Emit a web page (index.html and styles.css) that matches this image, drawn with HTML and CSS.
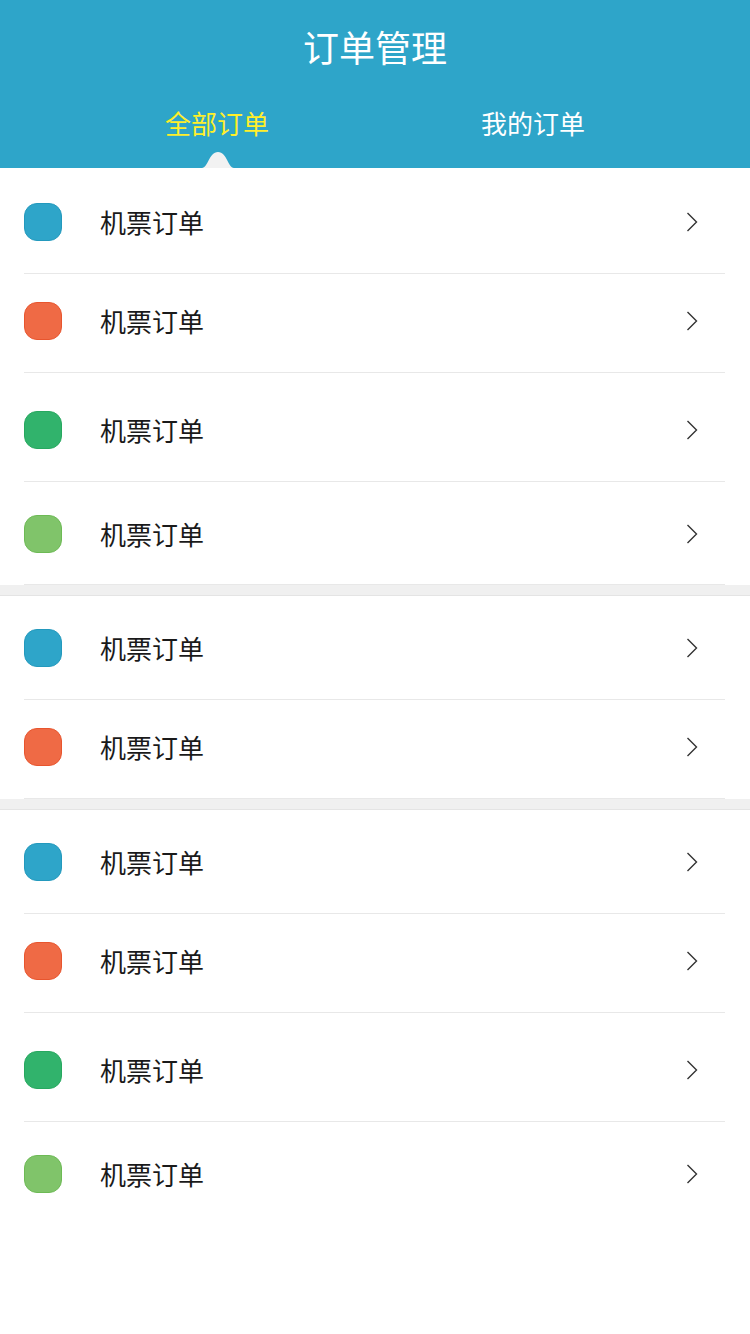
FILE: index.html
```html
<!DOCTYPE html>
<html lang="zh-CN">
<head>
<meta charset="UTF-8" />
<meta name="viewport" content="width=device-width, initial-scale=1" />
<title>订单管理</title>
<link rel="stylesheet" href="styles.css">
</head>
<body>
  <header class="header">
    <h1 class="title">订单管理</h1>
    <nav class="tabs">
      <a class="tab active" href="#">全部订单
        <svg class="hump" width="32" height="16" viewBox="0 0 32 16"><path d="M0 16 C6 16 7 0 16 0 C25 0 26 16 32 16 Z" fill="#f2f2f2"/></svg>
      </a>
      <a class="tab" href="#">我的订单</a>
    </nav>
  </header>

  <main>
    <ul class="group top">
      <li class="row r1"><span class="dot blue"></span><span class="name">机票订单</span><svg class="arrow" width="12" height="20" viewBox="0 0 12 20"><path d="M1.5 1 L10.5 10 L1.5 19" fill="none" stroke="#333" stroke-width="1.4"/></svg></li>
      <li class="row r2"><span class="dot orange"></span><span class="name">机票订单</span><svg class="arrow" width="12" height="20" viewBox="0 0 12 20"><path d="M1.5 1 L10.5 10 L1.5 19" fill="none" stroke="#333" stroke-width="1.4"/></svg></li>
      <li class="row r3"><span class="dot green"></span><span class="name">机票订单</span><svg class="arrow" width="12" height="20" viewBox="0 0 12 20"><path d="M1.5 1 L10.5 10 L1.5 19" fill="none" stroke="#333" stroke-width="1.4"/></svg></li>
      <li class="row r4"><span class="dot lime"></span><span class="name">机票订单</span><svg class="arrow" width="12" height="20" viewBox="0 0 12 20"><path d="M1.5 1 L10.5 10 L1.5 19" fill="none" stroke="#333" stroke-width="1.4"/></svg></li>
    </ul>
    <div class="gap"></div>
    <ul class="group">
      <li class="row r1"><span class="dot blue"></span><span class="name">机票订单</span><svg class="arrow" width="12" height="20" viewBox="0 0 12 20"><path d="M1.5 1 L10.5 10 L1.5 19" fill="none" stroke="#333" stroke-width="1.4"/></svg></li>
      <li class="row r2"><span class="dot orange"></span><span class="name">机票订单</span><svg class="arrow" width="12" height="20" viewBox="0 0 12 20"><path d="M1.5 1 L10.5 10 L1.5 19" fill="none" stroke="#333" stroke-width="1.4"/></svg></li>
    </ul>
    <div class="gap"></div>
    <ul class="group">
      <li class="row r1"><span class="dot blue"></span><span class="name">机票订单</span><svg class="arrow" width="12" height="20" viewBox="0 0 12 20"><path d="M1.5 1 L10.5 10 L1.5 19" fill="none" stroke="#333" stroke-width="1.4"/></svg></li>
      <li class="row r2"><span class="dot orange"></span><span class="name">机票订单</span><svg class="arrow" width="12" height="20" viewBox="0 0 12 20"><path d="M1.5 1 L10.5 10 L1.5 19" fill="none" stroke="#333" stroke-width="1.4"/></svg></li>
      <li class="row r3"><span class="dot green"></span><span class="name">机票订单</span><svg class="arrow" width="12" height="20" viewBox="0 0 12 20"><path d="M1.5 1 L10.5 10 L1.5 19" fill="none" stroke="#333" stroke-width="1.4"/></svg></li>
      <li class="row r4 last"><span class="dot lime"></span><span class="name">机票订单</span><svg class="arrow" width="12" height="20" viewBox="0 0 12 20"><path d="M1.5 1 L10.5 10 L1.5 19" fill="none" stroke="#333" stroke-width="1.4"/></svg></li>
    </ul>
  </main>
</body>
</html>
```

FILE: styles.css
```css
/* Reset */
* {
  box-sizing: border-box;
}
body {
  margin: 0;
  font-family: "Noto Sans CJK SC", "Noto Sans", sans-serif;
  background: #fff;
  color: #1a1a1a;
}
ul {
  list-style: none;
  margin: 0;
  padding: 0;
}

/* Header */
.header {
  background: #2ea5c9;
  height: 168px;
  padding-top: 23px;
  color: #fff;
}
.title {
  margin: 0;
  text-align: center;
  font-size: 36px;
  font-weight: 400;
  line-height: 46px;
}
.tabs {
  display: flex;
  justify-content: center;
  margin-top: 34px;
}
.tab {
  position: relative;
  width: 316px;
  text-align: center;
  font-size: 26px;
  line-height: 40px;
  color: #fff;
  text-decoration: none;
}
.tab.active {
  color: #ffef2a;
}
.hump {
  position: absolute;
  left: 50%;
  bottom: -25px;
  margin-left: -15px;
  display: block;
}

/* List */
.group.top {
  padding-top: 2px;
}
.row {
  display: flex;
  align-items: center;
  margin: 0 25px 0 24px;
  border-bottom: 1px solid #e8e8e8;
}
.row.last {
  border-bottom: none;
}
.r1 { height: 104px; }
.r2 { height: 99px; padding-bottom: 4px; }
.r3 { height: 109px; padding-top: 6px; }
.r4 { height: 103px; padding-top: 1px; }

.dot {
  width: 38px;
  height: 38px;
  border-radius: 13px;
  border: 1px solid;
  flex: none;
}
.dot.blue { background: #2ea5c9; border-color: #2399bd; }
.dot.orange { background: #ef6a45; border-color: #e8552e; }
.dot.green { background: #31b36c; border-color: #27a85f; }
.dot.lime { background: #80c46a; border-color: #6dba55; }

.name {
  flex: 1;
  margin-left: 38px;
  font-size: 26px;
  line-height: 36px;
}
.arrow {
  display: block;
  margin-right: 27px;
}

.gap {
  height: 11px;
  background: #f0f0f0;
  border-bottom: 1px solid #e4e4e4;
}
```
